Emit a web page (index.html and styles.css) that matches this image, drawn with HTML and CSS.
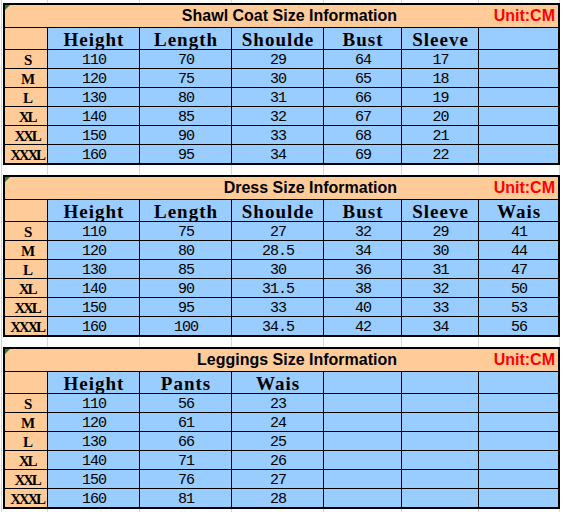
FILE: index.html
```html
<!DOCTYPE html>
<html lang="en">
<head>
<meta charset="utf-8">
<title>Size Information</title>
<link rel="stylesheet" href="styles.css">
</head>
<body>
<main class="sheet">
  <section class="size-table">
    <div class="title"><span class="title-name">Shawl Coat Size Information</span><span class="unit">Unit:CM</span></div>
    <div class="corner"></div><div class="hd">Height</div><div class="hd">Length</div><div class="hd">Shoulde</div><div class="hd">Bust</div><div class="hd">Sleeve</div><div class="hd"></div>
    <div class="lbl">S</div><div class="num">110</div><div class="num">70</div><div class="num">29</div><div class="num">64</div><div class="num">17</div><div class="num"></div>
    <div class="lbl">M</div><div class="num">120</div><div class="num">75</div><div class="num">30</div><div class="num">65</div><div class="num">18</div><div class="num"></div>
    <div class="lbl">L</div><div class="num">130</div><div class="num">80</div><div class="num">31</div><div class="num">66</div><div class="num">19</div><div class="num"></div>
    <div class="lbl">XL</div><div class="num">140</div><div class="num">85</div><div class="num">32</div><div class="num">67</div><div class="num">20</div><div class="num"></div>
    <div class="lbl">XXL</div><div class="num">150</div><div class="num">90</div><div class="num">33</div><div class="num">68</div><div class="num">21</div><div class="num"></div>
    <div class="lbl">XXXL</div><div class="num">160</div><div class="num">95</div><div class="num">34</div><div class="num">69</div><div class="num">22</div><div class="num"></div>
  </section>

  <section class="size-table">
    <div class="title"><span class="title-name">Dress Size Information</span><span class="unit">Unit:CM</span></div>
    <div class="corner"></div><div class="hd">Height</div><div class="hd">Length</div><div class="hd">Shoulde</div><div class="hd">Bust</div><div class="hd">Sleeve</div><div class="hd">Wais</div>
    <div class="lbl">S</div><div class="num">110</div><div class="num">75</div><div class="num">27</div><div class="num">32</div><div class="num">29</div><div class="num">41</div>
    <div class="lbl">M</div><div class="num">120</div><div class="num">80</div><div class="num">28.5</div><div class="num">34</div><div class="num">30</div><div class="num">44</div>
    <div class="lbl">L</div><div class="num">130</div><div class="num">85</div><div class="num">30</div><div class="num">36</div><div class="num">31</div><div class="num">47</div>
    <div class="lbl">XL</div><div class="num">140</div><div class="num">90</div><div class="num">31.5</div><div class="num">38</div><div class="num">32</div><div class="num">50</div>
    <div class="lbl">XXL</div><div class="num">150</div><div class="num">95</div><div class="num">33</div><div class="num">40</div><div class="num">33</div><div class="num">53</div>
    <div class="lbl">XXXL</div><div class="num">160</div><div class="num">100</div><div class="num">34.5</div><div class="num">42</div><div class="num">34</div><div class="num">56</div>
  </section>

  <section class="size-table">
    <div class="title"><span class="title-name">Leggings Size Information</span><span class="unit">Unit:CM</span></div>
    <div class="corner"></div><div class="hd">Height</div><div class="hd">Pants</div><div class="hd">Wais</div><div class="hd"></div><div class="hd"></div><div class="hd"></div>
    <div class="lbl">S</div><div class="num">110</div><div class="num">56</div><div class="num">23</div><div class="num"></div><div class="num"></div><div class="num"></div>
    <div class="lbl">M</div><div class="num">120</div><div class="num">61</div><div class="num">24</div><div class="num"></div><div class="num"></div><div class="num"></div>
    <div class="lbl">L</div><div class="num">130</div><div class="num">66</div><div class="num">25</div><div class="num"></div><div class="num"></div><div class="num"></div>
    <div class="lbl">XL</div><div class="num">140</div><div class="num">71</div><div class="num">26</div><div class="num"></div><div class="num"></div><div class="num"></div>
    <div class="lbl">XXL</div><div class="num">150</div><div class="num">76</div><div class="num">27</div><div class="num"></div><div class="num"></div><div class="num"></div>
    <div class="lbl">XXXL</div><div class="num">160</div><div class="num">81</div><div class="num">28</div><div class="num"></div><div class="num"></div><div class="num"></div>
  </section>
</main>
</body>
</html>
```

FILE: styles.css
```css
html, body {
  height: 100%;
}

body {
  margin: 0;
  background-color: #ffffff;
  background-image:
    linear-gradient(#d6d6d6, #d6d6d6),
    linear-gradient(#d6d6d6, #d6d6d6),
    linear-gradient(#d6d6d6, #d6d6d6),
    linear-gradient(#d6d6d6, #d6d6d6),
    linear-gradient(#d6d6d6, #d6d6d6),
    linear-gradient(#d6d6d6, #d6d6d6),
    linear-gradient(#d6d6d6, #d6d6d6),
    linear-gradient(#d6d6d6, #d6d6d6);
  background-size: 1px 100%;
  background-repeat: no-repeat;
  background-position: 1px 0, 47px 0, 139px 0, 231px 0, 323px 0, 401px 0, 478px 0, 559px 0;
}

.sheet {
  display: flex;
  flex-direction: column;
  gap: 10px;
  padding: 3px 0 0 3px;
}

.size-table {
  display: grid;
  grid-template-columns: 42px 91px 91px 91px 77px 76px 79px;
  grid-template-rows: 22px 21px repeat(6, 18px);
  gap: 1px;
  width: max-content;
  background: #000000;
  border: 2px solid #000000;
}

.title {
  grid-column: 1 / -1;
  position: relative;
  display: flex;
  background: #ffcc99;
  color: #000000;
  font: bold 16px/22px "Liberation Sans", Arial, sans-serif;
  white-space: nowrap;
}

.title::before {
  content: "";
  position: absolute;
  left: 0;
  top: 0;
  width: 0;
  height: 0;
  border-top: 5px solid #1f8a1f;
  border-right: 5px solid transparent;
}

.title-name {
  width: 392px;
  text-align: right;
}

.unit {
  margin-left: auto;
  padding-right: 3px;
  color: #ff0000;
}

.corner {
  background: #ffcc99;
}

.hd {
  background: #99ccff;
  text-align: center;
  padding-left: 1px;
  font: bold 19px/23px "Liberation Serif", "Times New Roman", serif;
  letter-spacing: 1px;
  color: #000000;
  white-space: nowrap;
}

.lbl {
  background: #ffcc99;
  text-align: center;
  padding-left: 2px;
  font: bold 15px/21px "Liberation Serif", "Times New Roman", serif;
  letter-spacing: -2.2px;
  color: #000000;
  white-space: nowrap;
}

.num {
  background: #99ccff;
  text-align: center;
  padding-left: 1px;
  font: 15px/22px "Liberation Mono", "Courier New", monospace;
  letter-spacing: -1px;
  color: #000000;
  white-space: nowrap;
}
```
